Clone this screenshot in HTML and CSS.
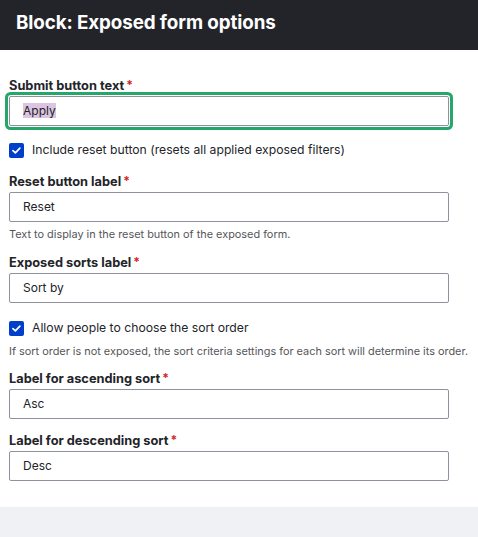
FILE: index.html
```html
<!DOCTYPE html>
<html lang="en">
<head>
<meta charset="utf-8">
<title>Block: Exposed form options</title>
<link rel="stylesheet" href="styles.css">
</head>
<body>
<header class="dialog-title">
  <h1>Block: Exposed form options</h1>
</header>
<main class="dialog-body">
  <div class="form-item item-submit">
    <label class="form-label" for="submit">Submit button text<span class="req">*</span></label>
    <div class="input focused" id="submit"><span class="selected">Apply</span></div>
  </div>

  <div class="check-item item-check1">
    <span class="checkbox"><svg viewBox="0 0 16 16" width="15" height="15"><path d="M4.2 8.1 L6.8 10.6 L11.6 5.4" fill="none" stroke="#fff" stroke-width="1.8" stroke-linecap="round" stroke-linejoin="round"/></svg></span>
    <span class="check-label">Include reset button (resets all applied exposed filters)</span>
  </div>

  <div class="form-item item-reset">
    <label class="form-label">Reset button label<span class="req">*</span></label>
    <div class="input">Reset</div>
    <div class="description">Text to display in the reset button of the exposed form.</div>
  </div>

  <div class="form-item item-sorts">
    <label class="form-label">Exposed sorts label<span class="req">*</span></label>
    <div class="input">Sort by</div>
  </div>

  <div class="check-item item-check2">
    <span class="checkbox"><svg viewBox="0 0 16 16" width="15" height="15"><path d="M4.2 8.1 L6.8 10.6 L11.6 5.4" fill="none" stroke="#fff" stroke-width="1.8" stroke-linecap="round" stroke-linejoin="round"/></svg></span>
    <span class="check-label">Allow people to choose the sort order</span>
  </div>
  <div class="description check-desc">If sort order is not exposed, the sort criteria settings for each sort will determine its order.</div>

  <div class="form-item item-asc">
    <label class="form-label">Label for ascending sort<span class="req">*</span></label>
    <div class="input">Asc</div>
  </div>

  <div class="form-item item-desc">
    <label class="form-label">Label for descending sort<span class="req">*</span></label>
    <div class="input">Desc</div>
  </div>
</main>
<footer class="dialog-footer"></footer>
</body>
</html>
```

FILE: styles.css
```css
html, body {
  margin: 0;
  padding: 0;
}
body {
  font-family: Inter, "Noto Sans", "Liberation Sans", sans-serif;
  color: #232429;
  background: #f0f1f5;
  width: 478px;
  height: 537px;
  overflow: hidden;
  display: flex;
  flex-direction: column;
}
.dialog-title {
  background: #232429;
  height: 50px;
  flex-shrink: 0;
  display: flex;
  align-items: center;
  padding: 0 16px;
  box-sizing: border-box;
}
.dialog-title h1 {
  margin: 0;
  color: #fff;
  font-size: 18.8px;
  font-weight: 700;
  letter-spacing: -0.1px;
  position: relative;
  top: -3px;
}
.dialog-body {
  background: #fff;
  padding: 28px 29px 0 9px;
  height: 457px;
  flex-shrink: 0;
  box-sizing: border-box;
  display: flex;
  flex-direction: column;
}
.form-item {
  display: flex;
  flex-direction: column;
}
.form-label {
  font-size: 12.8px;
  font-weight: 700;
  line-height: 16px;
  margin-bottom: 2px;
  display: flex;
  align-items: flex-start;
}
.req {
  color: #d72222;
  font-size: 12px;
  margin-left: 2px;
  line-height: 13px;
}
.input {
  box-sizing: border-box;
  width: 440px;
  height: 30px;
  border: 1px solid #8e929c;
  border-radius: 2px;
  padding: 0 13px;
  font-size: 12px;
  line-height: 28px;
  color: #232429;
  background: #fff;
}
.input.focused {
  box-shadow: 0 0 0 1px #fff, 0 0 0 4px #26a769;
  border-radius: 2px;
}
.selected {
  background: #dcc5e0;
}
.check-item {
  display: flex;
  align-items: center;
  height: 16px;
}
.checkbox {
  width: 15px;
  height: 15px;
  border-radius: 2px;
  background: #003ecc;
  display: flex;
  align-items: center;
  justify-content: center;
  flex-shrink: 0;
}
.checkbox svg {
  display: block;
}
.check-label {
  margin-left: 8px;
  font-size: 12.2px;
  line-height: 16px;
}
.description {
  font-size: 10.9px;
  line-height: 14px;
  color: #55565b;
  margin-top: 5px;
  white-space: nowrap;
}
.item-submit { margin-top: 0; }
.item-check1 { margin-top: 16px; }
.item-reset { margin-top: 16px; }
.item-sorts { margin-top: 14px; }
.item-check2 { margin-top: 17px; }
.check-desc { margin-top: 8px; }
.item-asc { margin-top: 13px; }
.item-desc { margin-top: 14px; }
.dialog-footer {
  flex: 1;
  background: #f0f1f5;
}
```
